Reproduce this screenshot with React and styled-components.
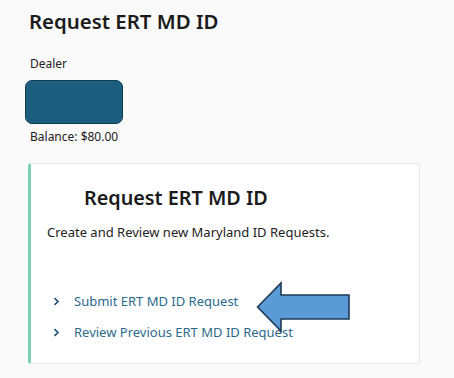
import React from 'react';
import styled, { createGlobalStyle } from 'styled-components';

const GlobalStyle = createGlobalStyle`
    html, body {
        margin: 0;
        padding: 0;
        background: #fafafa;
        font-family: 'Noto Sans', 'Open Sans', sans-serif;
        color: #222;
    }
`;

const Page = styled.div`
    width: 454px;
    height: 378px;
    padding: 8px 0 0 28px;
    box-sizing: border-box;
    overflow: hidden;
`;

const Title = styled.h1`
    margin: 0 0 0 1px;
    font-size: 20.4px;
    font-weight: 600;
    color: #1b1b1b;
    line-height: 26px;
`;

const Label = styled.div`
    margin-top: 22px;
    font-size: 12px;
    line-height: 16px;
    color: #222;
    padding-left: 2px;
`;

const DealerBox = styled.div`
    width: 98px;
    height: 44px;
    margin: 8px 0 0 -3px;
    background: #1b5e7e;
    border: 1px solid #0f3c52;
    border-radius: 7px;
    box-sizing: border-box;
`;

const Balance = styled.div`
    margin-top: 5px;
    font-size: 12px;
    line-height: 16px;
    padding-left: 2px;
`;

const Card = styled.div`
    position: relative;
    width: 392px;
    height: 201px;
    margin-top: 18px;
    background: #fff;
    border: 1px solid #e8e8e8;
    border-left: 3px solid #7ccfb3;
    border-radius: 3px;
    box-sizing: border-box;
    padding: 21px 0 0 16px;
`;

const CardTitle = styled.h2`
    margin: 0 0 0 37px;
    font-size: 19.8px;
    font-weight: 600;
    line-height: 26px;
    color: #1b1b1b;
`;

const CardText = styled.p`
    margin: 13px 0 0;
    font-size: 13px;
    line-height: 16px;
    color: #222;
`;

const Links = styled.ul`
    list-style: none;
    margin: 52px 0 0;
    padding: 0 0 0 6px;
    display: flex;
    flex-direction: column;
    gap: 12px;
`;

const LinkItem = styled.li`
    display: flex;
    align-items: center;
    gap: 14px;
    font-size: 13px;
    line-height: 19px;
    color: #2b6a8c;
`;

const Arrow = styled.svg`
    position: absolute;
    left: 225px;
    top: 117px;
`;

const Chevron = () => (
    <svg width="7" height="9" viewBox="0 0 7 9">
        <path d="M1.5 1.2 L5 4.5 L1.5 7.8" fill="none" stroke="#1f4f6e" strokeWidth="1.6" />
    </svg>
);

const links = ['Submit ERT MD ID Request', 'Review Previous ERT MD ID Request'];

export default function App() {
    return (
        <>
            <GlobalStyle />
            <Page>
                <Title>Request ERT MD ID</Title>
                <Label>Dealer</Label>
                <DealerBox />
                <Balance>Balance: $80.00</Balance>
                <Card>
                    <CardTitle>Request ERT MD ID</CardTitle>
                    <CardText>Create and Review new Maryland ID Requests.</CardText>
                    <Links>
                        {links.map(l => (
                            <LinkItem key={l}>
                                <Chevron />
                                {l}
                            </LinkItem>
                        ))}
                    </Links>
                    <Arrow width="96" height="52" viewBox="0 0 96 52">
                        <path
                            d="M1.5 26 L25 2 L25 14 L93 14 L93 38 L25 38 L25 50 Z"
                            fill="#5b9bd5"
                            stroke="#1d3a58"
                            strokeWidth="1.6"
                            strokeLinejoin="miter"
                        />
                    </Arrow>
                </Card>
            </Page>
        </>
    );
}
